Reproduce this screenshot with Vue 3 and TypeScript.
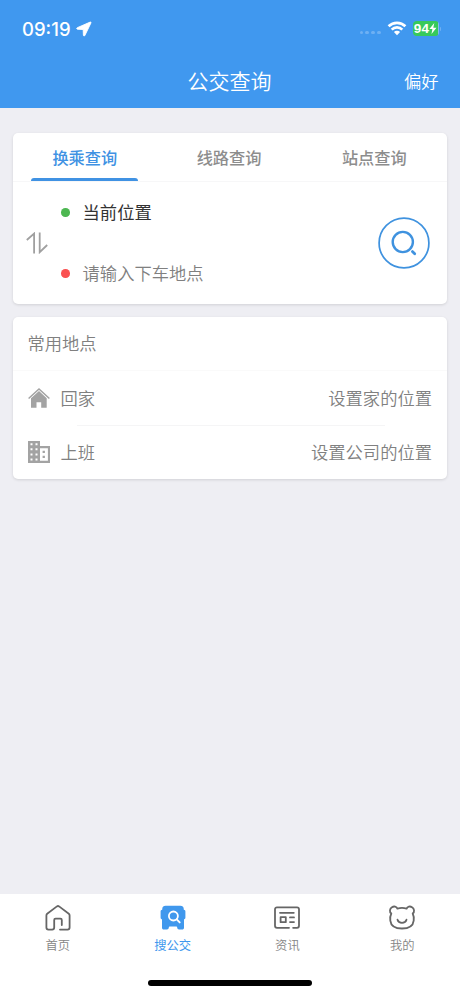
<script setup lang="ts">
import { ref } from 'vue'

type NavIcon = 'home' | 'bus' | 'news' | 'bear'

interface Place {
  name: string
  hint: string
  icon: 'house' | 'office'
}

const tabs: string[] = ['换乘查询', '线路查询', '站点查询']
const activeTab = ref(0)

const places: Place[] = [
  { name: '回家', hint: '设置家的位置', icon: 'house' },
  { name: '上班', hint: '设置公司的位置', icon: 'office' },
]

const navItems: { label: string; icon: NavIcon }[] = [
  { label: '首页', icon: 'home' },
  { label: '搜公交', icon: 'bus' },
  { label: '资讯', icon: 'news' },
  { label: '我的', icon: 'bear' },
]
const activeNav = ref(1)
</script>

<template>
  <div class="screen">
    <header class="header">
      <div class="status">
        <div class="status-left">
          <span class="time">09:19</span>
          <svg class="location" width="16" height="16" viewBox="0 0 16 16">
            <path d="M14.200 1.100 1.300 6.700c-.9.4-.7 1.400.2 1.500l5.700.3.2 5.700c.1.9 1.100 1.100 1.500.2l6-12.400c.3-.7-.1-1.200-.7-.9Z" fill="#fff" stroke="#fff" stroke-width=".9" stroke-linejoin="round" />
          </svg>
        </div>
        <div class="status-right">
          <span class="dots"><i></i><i></i><i></i><i></i></span>
          <svg class="wifi" width="20" height="15" viewBox="0 0 20 15">
            <g fill="none" stroke="#fff" stroke-width="2.700">
              <path d="M1.600 5.300a12 12 0 0 1 16.800 0" />
              <path d="M4.700 8.600a7.500 7.500 0 0 1 10.600 0" />
            </g>
            <path d="M10 14.200 6.900 11a4.400 4.400 0 0 1 6.200 0Z" fill="#fff" />
          </svg>
          <span class="battery">
            <span class="level">94</span>
            <svg width="8" height="11" viewBox="0 0 8 11">
              <path d="M5.300 0 .4 6.100h3L2.500 11l5-6.300H4.300Z" fill="#fff" />
            </svg>
          </span>
          <span class="battery-tip"></span>
        </div>
      </div>
      <div class="title-bar">
        <span></span>
        <h1>公交查询</h1>
        <button class="preference">偏好</button>
      </div>
    </header>

    <main class="content">
      <section class="card">
        <div class="tabs">
          <button
            v-for="(tab, i) in tabs"
            :key="tab"
            class="tab"
            :class="{ active: i === activeTab }"
            @click="activeTab = i"
          >
            {{ tab }}
          </button>
        </div>
        <div class="search">
          <svg class="swap" width="22" height="22" viewBox="0 0 22 22">
            <g fill="none" stroke="#a0a0a0" stroke-width="1.800">
              <path d="M.8 8 8.100 1.600V21.500" />
              <path d="M13.700.5V20.200L21.200 13" />
            </g>
          </svg>
          <div class="route">
            <div class="stop"><i class="dot start"></i><span>当前位置</span></div>
            <div class="stop empty"><i class="dot end"></i><span>请输入下车地点</span></div>
          </div>
          <button class="go">
            <svg width="52" height="52" viewBox="0 0 52 52">
              <g fill="none" stroke="#3f92df">
                <circle cx="26" cy="26" r="24.900" stroke-width="1.700" />
                <circle cx="24.800" cy="25" r="10.100" stroke-width="2.400" />
                <path d="m34.400 34.600 2.300 2.200" stroke-width="2.800" stroke-linecap="round" />
              </g>
            </svg>
          </button>
        </div>
      </section>

      <section class="card places">
        <h2>常用地点</h2>
        <div v-for="place in places" :key="place.name" class="place">
          <svg v-if="place.icon === 'house'" width="24" height="24" viewBox="0 0 24 24">
            <path d="M1.600 12.500 12 3l10.400 9.500" fill="none" stroke="#a3a3a3" stroke-width="1.500" />
            <path d="M12 5 4 12.300v9.400h5.500v-5.500h4.700v5.500h5.500v-9.400Z" fill="#a3a3a3" />
          </svg>
          <svg v-else width="24" height="24" viewBox="0 0 24 24">
            <path fill="#a3a3a3" fill-rule="evenodd" d="M1 1h12v5h10v17H1ZM3.500 3.300v2h2v-2ZM8.500 3.300v2h2v-2ZM3.500 8.300v2h2v-2ZM8.500 8.300v2h2v-2ZM3.500 13.500v2h2v-2ZM8.500 13.500v2h2v-2ZM3.500 18.600v2h2v-2ZM8.500 18.600v2h2v-2ZM13 8.200v12.500h7.900V8.200Z" />
            <path d="M15.600 10.800h2.300v2.300h-2.300ZM15.600 15.700h2.300V18h-2.300Z" fill="#a3a3a3" />
          </svg>
          <span class="name">{{ place.name }}</span>
          <span class="hint">{{ place.hint }}</span>
        </div>
      </section>
    </main>

    <footer class="footer">
      <nav class="nav">
        <button
          v-for="(item, i) in navItems"
          :key="item.label"
          class="nav-item"
          :class="{ active: i === activeNav }"
          @click="activeNav = i"
        >
          <svg v-if="item.icon === 'home'" width="28" height="28" viewBox="0 0 28 28">
            <path d="M16 25.600h7.600c1.200 0 2-.8 2-2V11.400c0-.7-.3-1.200-.8-1.600L15.100 2.400a2 2 0 0 0-2.200 0L3.200 9.800c-.5.4-.8.9-.8 1.600v12.200c0 1.200.8 2 2 2h3.800c1.200 0 2-.8 2-2v-7.700c0-.8.5-1.300 1.300-1.300h5c.8 0 1.300.5 1.300 1.300v5.200" fill="none" stroke="#666" stroke-width="1.800" stroke-linecap="round" stroke-linejoin="round" />
          </svg>
          <svg v-else-if="item.icon === 'bus'" width="28" height="28" viewBox="0 0 28 28">
            <path d="M6.500 1.700h15c1.900 0 3 1 3.200 2.700l.1 1.300c1 .1 1.600.7 1.600 1.700v6.200c0 1-.5 1.600-1.400 1.800v8.300c0 1.100-.7 1.800-1.800 1.800h-3.200c-1 0-1.700-.7-1.700-1.700l-.6-1.300h-7.400l-.6 1.300c0 1-.7 1.700-1.700 1.700H4.800c-1.100 0-1.800-.7-1.800-1.800v-8.300c-.9-.2-1.400-.8-1.400-1.800V7.400c0-1 .6-1.600 1.600-1.700l.1-1.300C3.500 2.700 4.600 1.700 6.500 1.700Z" fill="#4098ed" />
            <circle cx="14.400" cy="12" r="4.500" fill="none" stroke="#fff" stroke-width="1.800" />
            <path d="m17.700 15.300 3 3.100" stroke="#fff" stroke-width="1.900" stroke-linecap="round" />
          </svg>
          <svg v-else-if="item.icon === 'news'" width="28" height="28" viewBox="0 0 28 28">
            <g fill="none" stroke="#666" stroke-width="1.800" stroke-linecap="round" stroke-linejoin="round">
              <path d="M16 23.800H4c-1.200 0-2-.8-2-2V5.300c0-1.200.8-2 2-2h20c1.200 0 2 .8 2 2v16.500c0 1.200-.8 2-2 2h-3.900" />
              <path d="M7 8.800h13.800M7.600 13.200h5.200v5H7.600ZM17 13.400h4M17 18.100h4" />
            </g>
          </svg>
          <svg v-else width="28" height="28" viewBox="0 0 28 28">
            <g fill="none" stroke="#666" stroke-width="1.800" stroke-linecap="round" stroke-linejoin="round">
              <path d="M9.400 4.600C8.600 2.500 6 1.900 4 3.200 1.600 4.700 1.200 7.900 3.300 9.500 2.300 11.500 2 14 2.300 16.600 2.900 21.900 6.700 24.500 14 24.500s11.100-2.600 11.700-7.900c.3-2.600 0-5.100-1-7.100 2.100-1.600 1.700-4.800-.7-6.300-2-1.300-4.600-.7-5.400 1.400-3-.9-6.200-.9-9.200 0Z" />
              <path d="M9.500 15.700c.6 2 2.300 3.100 4.500 3.100s3.900-1.100 4.500-3.100" />
            </g>
          </svg>
          <span>{{ item.label }}</span>
        </button>
      </nav>
      <div class="home-bar"></div>
    </footer>
  </div>
</template>

<style>
body {
  margin: 0;
  background: #eeeef3;
}
</style>

<style scoped>
.screen {
  display: flex;
  flex-direction: column;
  width: 460px;
  height: 996px;
  overflow: hidden;
  background: #eeeef3;
  color: #808080;
  font-family: "Noto Sans CJK SC", sans-serif;
  font-size: 17.300px;
  font-weight: 350;
}
button {
  padding: 0;
  border: 0;
  background: none;
  color: inherit;
  font: inherit;
}
h1,
h2 {
  margin: 0;
  font-weight: inherit;
}
.header {
  height: 108px;
  background: #4098ef;
  color: #fff;
}
.status {
  display: flex;
  justify-content: space-between;
  height: 54px;
  padding: 0 19px 0 22px;
}
.status-left,
.status-right {
  display: flex;
  align-items: center;
  height: 57px;
}
.time {
  font: 550 18.500px Inter, sans-serif;
}
.location {
  margin-left: 5px;
}
.dots {
  display: flex;
  gap: 2.200px;
  padding-top: 8px;
}
.dots i {
  width: 3.600px;
  height: 3.600px;
  border-radius: 1.500px;
  background: #6eb0f3;
}
.wifi {
  margin-left: 6px;
}
.battery {
  display: flex;
  align-items: center;
  justify-content: center;
  box-sizing: border-box;
  width: 26px;
  height: 15px;
  margin-left: 6px;
  border-radius: 4px;
  background: linear-gradient(90deg, #37c95b 25px, #86bfeb 25px);
}
.level {
  font: 700 13.500px "Liberation Sans", sans-serif;
  letter-spacing: .2px;
}
.battery-tip {
  width: 1.500px;
  height: 4px;
  margin-left: 1px;
  border-radius: 0 2px 2px 0;
  background: #6eb0f3;
}
.title-bar {
  display: grid;
  grid-template-columns: 1fr auto 1fr;
  align-items: center;
  height: 52px;
  padding: 0 21.500px 0 20.500px;
}
.title-bar h1 {
  font-size: 21px;
  line-height: 30px;
}
.preference {
  justify-self: end;
}
.content {
  display: flex;
  flex: 1;
  flex-direction: column;
  gap: 13px;
  padding: 25px 13px 0;
}
.card {
  border-radius: 5px;
  background: #fff;
  box-shadow: 0 1px 3px rgba(0, 0, 0, 0.12);
}
.tabs {
  display: grid;
  grid-template-columns: 143.500px 145px 1fr;
  height: 48px;
  border-bottom: 1px solid #f7f7f8;
}
.tab {
  display: flex;
  flex-direction: column;
  align-items: center;
  height: 48px;
  color: #8d8d8d;
  font-size: 16.200px;
  font-weight: 500;
  line-height: 48px;
}
.tab.active {
  color: #4092e3;
}
.tab.active::after {
  width: 107px;
  height: 3px;
  margin-top: -3px;
  border-radius: 3px 3px 0 0;
  background: #4092e3;
  content: "";
}
.search {
  display: flex;
  align-items: center;
  height: 122px;
  padding: 0 17px 0 13px;
}
.route {
  display: flex;
  flex: 1;
  flex-direction: column;
  margin-left: 13.400px;
}
.stop {
  display: flex;
  align-items: center;
  gap: 12.600px;
  height: 60.500px;
  color: #333;
  font-weight: 400;
}
.stop span {
  padding-bottom: 2px;
}
.stop.empty {
  color: #808080;
  font-weight: 350;
}
.dot {
  width: 8.600px;
  height: 8.600px;
  border-radius: 50%;
}
.start {
  background: #4db751;
}
.end {
  background: #fa5151;
}
.go {
  display: flex;
}
.places {
  height: 162px;
}
.places h2 {
  height: 53px;
  padding-left: 14.500px;
  border-bottom: 1px solid #fafafa;
  font-size: inherit;
  line-height: 52px;
}
.place {
  display: flex;
  align-items: center;
  height: 54px;
  padding: 0 15px 0 14px;
}
.place + .place {
  background: linear-gradient(#f5f5f6, #f5f5f6) 64px 0 / 308px 1px no-repeat;
}
.place span {
  padding-bottom: 2px;
}
.name {
  margin-left: 9.500px;
}
.hint {
  margin-left: auto;
}
.footer {
  display: flex;
  flex-direction: column;
  align-items: center;
  height: 102px;
  background: #fff;
}
.nav {
  display: grid;
  grid-template-columns: repeat(4, 114.800px);
  box-sizing: border-box;
  width: 100%;
  height: 85.500px;
  padding-left: .4px;
}
.nav-item {
  display: flex;
  flex-direction: column;
  align-items: center;
  justify-content: flex-start;
  padding-top: 10px;
  color: #858585;
  font-size: 12.300px;
  line-height: 18px;
}
.nav-item span {
  margin-top: 4px;
}
.nav-item.active {
  color: #4098ed;
  font-weight: 400;
}
.home-bar {
  width: 164px;
  height: 6px;
  border-radius: 3px;
  background: #000;
}
</style>
